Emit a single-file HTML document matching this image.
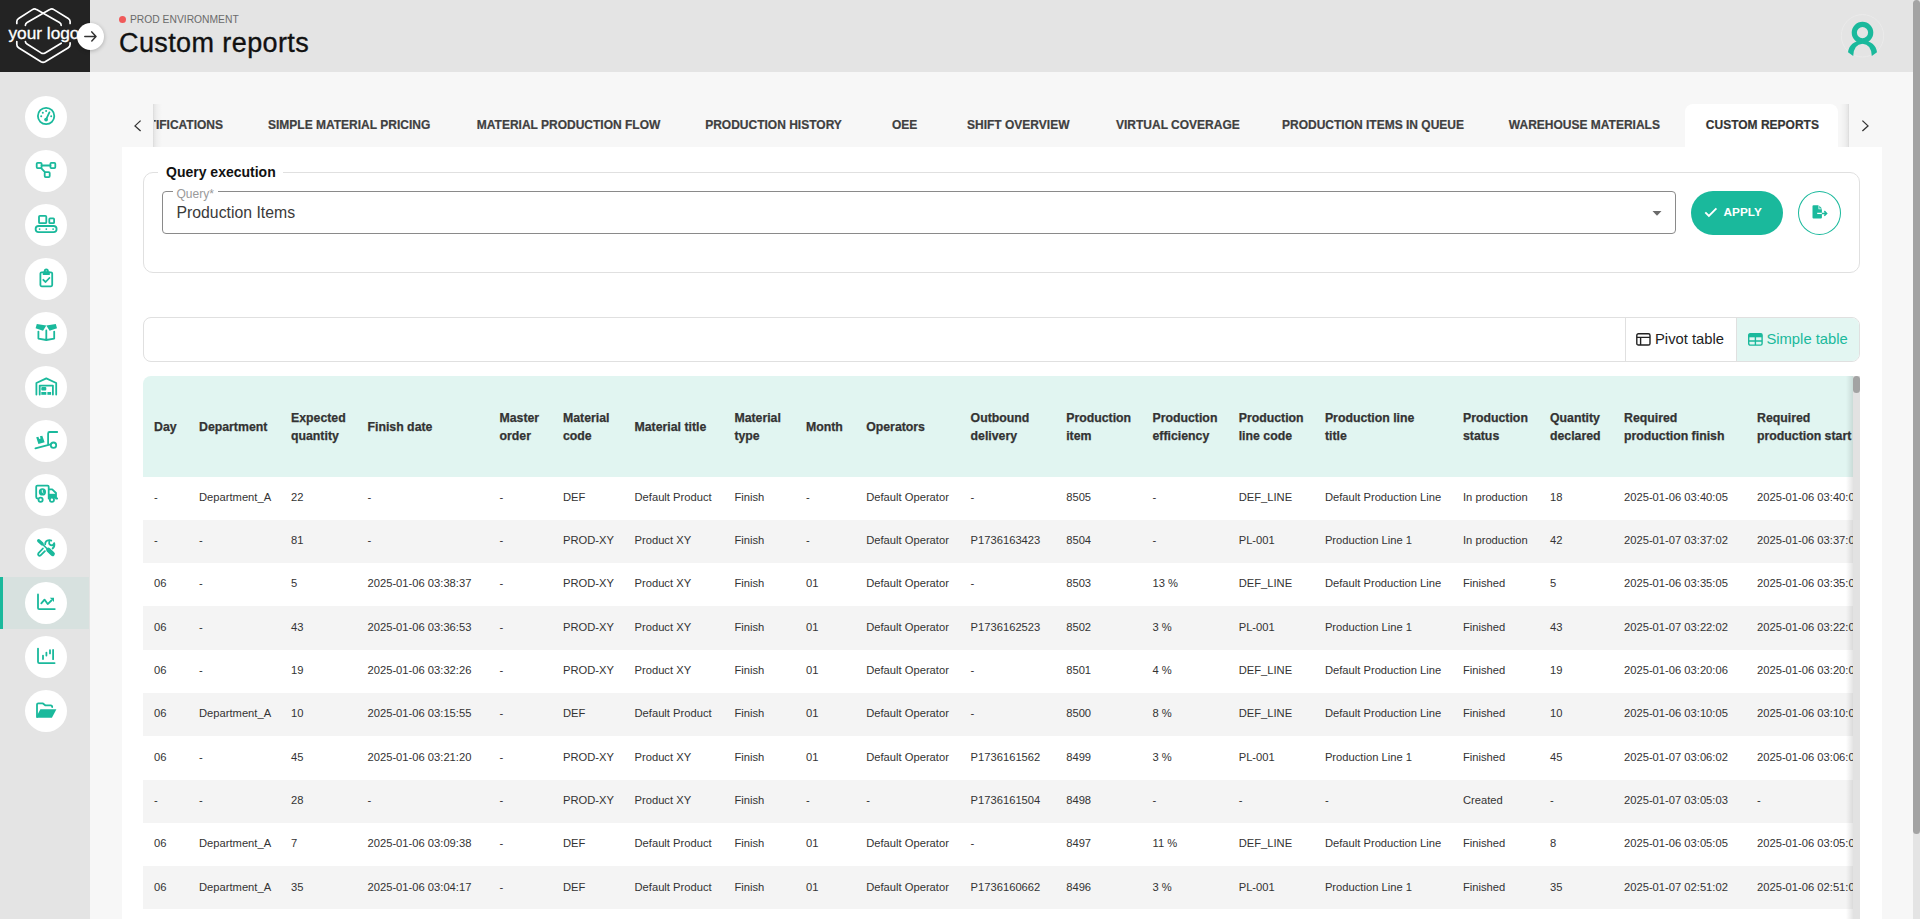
<!DOCTYPE html>
<html><head><meta charset="utf-8">
<style>
*{box-sizing:border-box;margin:0;padding:0}
html,body{width:1920px;height:919px;overflow:hidden;background:#f7f7f7;font-family:"Liberation Sans",sans-serif;color:#333}
.abs{position:absolute}
#hdr{position:absolute;left:0;top:0;width:1913px;height:72px;background:#e4e4e4}
#logo{position:absolute;left:0;top:0;width:90px;height:72px;background:#232323}
#side{position:absolute;left:0;top:72px;width:90px;height:847px;background:#e4e4e4}
.sb{position:absolute;left:25px;width:42px;height:42px;border-radius:50%;background:#fff}
.sb svg{position:absolute;left:0;top:0}
.tab{position:absolute;top:14px;font-size:12px;font-weight:bold;color:#404040;-webkit-text-stroke:0.2px #404040;white-space:nowrap;line-height:14px}
#card{position:absolute;left:122px;top:147px;width:1760px;height:772px;background:#fff}
.hd{position:absolute;font-size:12.3px;font-weight:bold;color:#333;-webkit-text-stroke:0.25px #333;line-height:18px;white-space:nowrap}
.cl{position:absolute;font-size:11.2px;color:#333;line-height:14px;white-space:nowrap}
.row{position:absolute;left:0;width:1710px}
</style></head><body>

<div id="hdr"></div>
<div class="abs" style="left:119px;top:16px;width:7px;height:7px;border-radius:50%;background:#f05a5a"></div>
<div class="abs" style="left:130px;top:14px;font-size:10.3px;color:#6b6b6b;line-height:12px;white-space:nowrap">PROD ENVIRONMENT</div>
<div class="abs" style="left:119px;top:28px;font-size:27px;color:#111;-webkit-text-stroke:0.35px #111;line-height:30px;white-space:nowrap;letter-spacing:0.4px">Custom reports</div>
<svg class="abs" style="left:1840px;top:14px" width="45" height="45" viewBox="0 0 45 45"><circle cx="22.5" cy="21.8" r="21.2" fill="none" stroke="#ebebeb" stroke-width="1"/><circle cx="22.5" cy="18.6" r="8.2" fill="none" stroke="#1ab99c" stroke-width="5.2"/><path d="M8 38.2 Q9.6 27 22.5 26.4 Q35.4 27 37 38.2 L31.8 42 Q31.2 30.2 22.5 29.8 Q13.8 30.2 13.2 42 Z" fill="#1ab99c"/></svg>
<div id="logo"><svg class="abs" style="left:0;top:0" width="90" height="72" viewBox="0 0 90 72"><path d="M16.8 23.5 V21.6 Q16.8 19.6 18.6 18.5 L32.4 9.6 Q34.5 8.3 36.6 9.6 L59.5 22.4 Q61.2 23.4 61.2 25.3" fill="none" stroke="#fff" stroke-width="1.7" stroke-linecap="round" stroke-linejoin="round"/><path d="M70.1 23.5 V21.6 Q70.1 19.6 68.3 18.5 L53.9 9.6 Q51.8 8.3 49.7 9.6 L27.1 22.4 Q25.4 23.4 25.4 25.3" fill="none" stroke="#fff" stroke-width="1.7" stroke-linecap="round" stroke-linejoin="round"/><path d="M16.8 41.6 V44.6 Q16.8 46.6 18.6 47.7 L41 61.8 Q43.1 63 45.2 61.8 L68.3 47.7 Q70.1 46.6 70.1 44.6 V42.8" fill="none" stroke="#fff" stroke-width="1.7" stroke-linecap="round" stroke-linejoin="round"/><path d="M25.4 41.6 Q25.6 43.2 27 44 L41.1 52.9 Q43.1 54.1 45.1 52.9 L61.2 43.2" fill="none" stroke="#fff" stroke-width="1.7" stroke-linecap="round" stroke-linejoin="round"/></svg><div class="abs" style="left:8.4px;top:22.6px;font-size:17.3px;color:#fff;-webkit-text-stroke:0.3px #fff;line-height:20px;white-space:nowrap">your logo</div><div class="abs" style="left:77px;top:23px;width:27px;height:27px;border-radius:50%;background:#fff;box-shadow:0 1px 4px rgba(0,0,0,0.25)"></div><svg class="abs" style="left:77px;top:23px" width="27" height="27" viewBox="0 0 27 27"><path d="M7.8 13.4 H18.6 M14.8 8.9 L19 13.4 L14.8 17.9" fill="none" stroke="#333" stroke-width="1.5" stroke-linecap="round" stroke-linejoin="round"/></svg></div>
<div id="side"></div>
<div class="abs" style="left:0;top:577px;width:89px;height:52px;background:#d7e1df"></div><div class="abs" style="left:0;top:577px;width:3px;height:52px;background:#1ab99c"></div>
<div class="sb" style="top:96px"><svg width="42" height="42" viewBox="0 0 42 42"><circle cx="21.1" cy="20" r="8.2" fill="none" stroke="#1ab99c" stroke-width="1.8" stroke-linecap="round" stroke-linejoin="round"/><path d="M21.1 23.4 L24.4 16.4" fill="none" stroke="#1ab99c" stroke-width="1.8" stroke-linecap="round" stroke-linejoin="round"/><circle cx="21.1" cy="23.6" r="1.9" fill="#1ab99c"/><circle cx="21.1" cy="14.9" r="1" fill="#1ab99c"/><circle cx="17.8" cy="16.8" r="1" fill="#1ab99c"/><circle cx="16.2" cy="20.2" r="1" fill="#1ab99c"/><circle cx="26.2" cy="20.2" r="1" fill="#1ab99c"/></svg></div>
<div class="sb" style="top:150px"><svg width="42" height="42" viewBox="0 0 42 42"><rect x="11.7" y="12.8" width="4.9" height="5.3" rx="1" fill="none" stroke="#1ab99c" stroke-width="1.8" stroke-linecap="round" stroke-linejoin="round"/><rect x="25.4" y="12.8" width="4.9" height="5.3" rx="1" fill="none" stroke="#1ab99c" stroke-width="1.8" stroke-linecap="round" stroke-linejoin="round"/><rect x="19.7" y="22.1" width="5" height="5" rx="1" fill="none" stroke="#1ab99c" stroke-width="1.8" stroke-linecap="round" stroke-linejoin="round"/><path d="M16.6 15.5 H25.4 M16.2 18.1 L19.9 22.2" fill="none" stroke="#1ab99c" stroke-width="1.8" stroke-linecap="round" stroke-linejoin="round"/></svg></div>
<div class="sb" style="top:204px"><svg width="42" height="42" viewBox="0 0 42 42"><rect x="14" y="11.8" width="7.3" height="7.4" rx="1" fill="none" stroke="#1ab99c" stroke-width="1.8" stroke-linecap="round" stroke-linejoin="round"/><rect x="24.3" y="14.4" width="4.8" height="4.8" rx="0.8" fill="none" stroke="#1ab99c" stroke-width="1.8" stroke-linecap="round" stroke-linejoin="round"/><rect x="10.6" y="22" width="21" height="6.2" rx="3.1" fill="none" stroke="#1ab99c" stroke-width="1.8" stroke-linecap="round" stroke-linejoin="round"/><circle cx="14.6" cy="25.1" r="0.9" fill="#1ab99c"/><circle cx="21.3" cy="25.1" r="0.9" fill="#1ab99c"/><circle cx="28.1" cy="25.1" r="0.9" fill="#1ab99c"/></svg></div>
<div class="sb" style="top:258px"><svg width="42" height="42" viewBox="0 0 42 42"><rect x="15.4" y="14.3" width="11.8" height="14" rx="1.2" fill="none" stroke="#1ab99c" stroke-width="1.8" stroke-linecap="round" stroke-linejoin="round"/><path d="M18.5 14.3 H24.1 V16.3 H18.5 Z" fill="#1ab99c" stroke="#1ab99c" stroke-width="1.4"/><circle cx="21.3" cy="13.1" r="1.6" fill="none" stroke="#1ab99c" stroke-width="1.8" stroke-linecap="round" stroke-linejoin="round"/><path d="M18.3 21.8 L20.6 24 L24.4 20" fill="none" stroke="#1ab99c" stroke-width="1.8" stroke-linecap="round" stroke-linejoin="round"/></svg></div>
<div class="sb" style="top:312px"><svg width="42" height="42" viewBox="0 0 42 42"><path d="M11.8 12 L21.3 13.6 L18 18.8 L10.6 16.3 Z" fill="#1ab99c"/><path d="M30.8 12 L21.3 13.6 L24.6 18.8 L32 16.3 Z" fill="#1ab99c"/><path d="M13.4 19.6 V26.6 L21.3 28 L29.2 26.6 V19.6 M21.3 18.4 V27.6" fill="none" stroke="#1ab99c" stroke-width="1.8" stroke-linecap="round" stroke-linejoin="round"/></svg></div>
<div class="sb" style="top:366px"><svg width="42" height="42" viewBox="0 0 42 42"><path d="M11.4 28.6 V17 L21.3 12.4 L31.2 17 V28.6" fill="none" stroke="#1ab99c" stroke-width="1.8" stroke-linecap="round" stroke-linejoin="round"/><path d="M14.7 28.6 V19.6 H27.9 V28.6" fill="none" stroke="#1ab99c" stroke-width="1.8" stroke-linecap="round" stroke-linejoin="round"/><rect x="16.3" y="21" width="5" height="3.6" rx="1" fill="#1ab99c"/><rect x="16.3" y="26" width="5" height="2.8" fill="#1ab99c"/><rect x="22.4" y="26" width="3.7" height="2.8" fill="#1ab99c"/></svg></div>
<div class="sb" style="top:420px"><svg width="42" height="42" viewBox="0 0 42 42"><path d="M32.2 12 H24.6 Q23.1 12 23.1 13.5 V24.4 M10.4 28.3 L25.6 24.4" fill="none" stroke="#1ab99c" stroke-width="1.8" stroke-linecap="round" stroke-linejoin="round"/><circle cx="28.5" cy="25.2" r="2.7" fill="none" stroke="#1ab99c" stroke-width="1.8" stroke-linecap="round" stroke-linejoin="round"/><path d="M11.2 17.3 L13.4 16.8 L14.2 19 L15.6 18.6 L14.9 16.3 L17.3 15.7 L19.6 22.2 L13.4 24 Z" fill="#1ab99c"/></svg></div>
<div class="sb" style="top:474px"><svg width="42" height="42" viewBox="0 0 42 42"><path d="M12.6 24.5 Q11.2 24.5 11.2 23.1 V12.8 Q11.2 11.6 12.4 11.6 H22.6 Q23.7 11.6 23.7 12.8 V24.5 M23.7 15.3 H27.2 L31 19 V24.5 H32.2" fill="none" stroke="#1ab99c" stroke-width="1.8" stroke-linecap="round" stroke-linejoin="round"/><path d="M23.7 19.8 H31 V24.5 H23.7 Z" fill="#1ab99c"/><circle cx="15.6" cy="25.8" r="2.1" fill="#fff" fill="none" stroke="#1ab99c" stroke-width="1.8" stroke-linecap="round" stroke-linejoin="round"/><circle cx="26.9" cy="25.8" r="2.1" fill="#fff" fill="none" stroke="#1ab99c" stroke-width="1.8" stroke-linecap="round" stroke-linejoin="round"/><circle cx="17.4" cy="17.9" r="3.6" fill="#1ab99c"/><path d="M17.3 15.9 V18.2 L18.4 19" stroke="#fff" stroke-width="0.9" fill="none"/></svg></div>
<div class="sb" style="top:528px"><svg width="42" height="42" viewBox="0 0 42 42"><path d="M13.7 12.7 L17.1 15.8" stroke="#1ab99c" stroke-width="3.3" stroke-linecap="round"/><path d="M17 15.8 L23 21.6" stroke="#1ab99c" stroke-width="1.5"/><path d="M23.4 21.9 L27.6 25.9" stroke="#1ab99c" stroke-width="4.5" stroke-linecap="round"/><path d="M17.9 20.5 L13.5 25.1 Q12.6 26.3 13.5 27.3 Q14.5 28.2 15.6 27.3 L19.9 23.2" fill="none" stroke="#1ab99c" stroke-width="1.8" stroke-linecap="round" stroke-linejoin="round" stroke-width="1.6"/><path d="M20.2 16.4 Q20 12.7 24.3 12.2 Q25.6 12.2 26.3 12.6 M24.2 13.8 Q23.6 17.3 27.3 17.4 Q28.7 16.8 29.2 15.1 Q30 18.4 27.6 20.5" fill="none" stroke="#1ab99c" stroke-width="1.8" stroke-linecap="round" stroke-linejoin="round" stroke-width="1.6"/></svg></div>
<div class="sb" style="top:582px"><svg width="42" height="42" viewBox="0 0 42 42"><path d="M13 12.4 V26 Q13 27.1 14.1 27.1 H29.8" fill="none" stroke="#1ab99c" stroke-width="1.8" stroke-linecap="round" stroke-linejoin="round"/><path d="M16.3 21.4 L19.5 17.6 L22.7 22.1 L26.4 18.5" fill="none" stroke="#1ab99c" stroke-width="1.8" stroke-linecap="round" stroke-linejoin="round"/><path d="M24.8 15.8 H29 V20 Z" fill="#1ab99c"/></svg></div>
<div class="sb" style="top:636px"><svg width="42" height="42" viewBox="0 0 42 42"><path d="M13 12.6 V25.8 Q13 27.1 14.3 27.1 H29.6" fill="none" stroke="#1ab99c" stroke-width="1.8" stroke-linecap="round" stroke-linejoin="round"/><path d="M18 19.6 V23.1 M21.4 16.6 V19.5 M25 14.2 V17.4 M28.1 14 V23.2" fill="none" stroke="#1ab99c" stroke-width="1.8" stroke-linecap="round" stroke-linejoin="round" stroke-width="1.8"/></svg></div>
<div class="sb" style="top:690px"><svg width="42" height="42" viewBox="0 0 42 42"><path d="M12 27 V14.6 Q12 13.3 13.3 13.3 H17.6 L20.2 15.3 H25.6 Q27.2 15.3 27.2 17" fill="none" stroke="#1ab99c" stroke-width="1.8" stroke-linecap="round" stroke-linejoin="round"/><path d="M15.4 19.2 H31.4 L26.9 27.8 H12 V25.5 Z" fill="#1ab99c"/></svg></div>
<div class="abs" style="left:1684.7px;top:104px;width:153.2px;height:43px;background:#fff;border-radius:8px 8px 0 0"></div>
<div class="abs" style="left:154px;top:104px;width:1694px;height:43px;overflow:hidden">
<div class="tab" style="right:1625px">NOTIFICATIONS</div>
<div class="tab" style="left:114px;color:#404040">SIMPLE MATERIAL PRICING</div>
<div class="tab" style="left:322.8px;color:#404040">MATERIAL PRODUCTION FLOW</div>
<div class="tab" style="left:551.2px;color:#404040">PRODUCTION HISTORY</div>
<div class="tab" style="left:738px;color:#404040">OEE</div>
<div class="tab" style="left:813px;color:#404040">SHIFT OVERVIEW</div>
<div class="tab" style="left:962px;color:#404040">VIRTUAL COVERAGE</div>
<div class="tab" style="left:1128px;color:#404040">PRODUCTION ITEMS IN QUEUE</div>
<div class="tab" style="left:1354.8px;color:#404040">WAREHOUSE MATERIALS</div>
<div class="tab" style="left:1551.8px;color:#333">CUSTOM REPORTS</div>
</div>
<div class="abs" style="left:153px;top:104px;width:9px;height:43px;background:linear-gradient(90deg,rgba(0,0,0,0.13) 0,rgba(0,0,0,0.07) 1px,rgba(0,0,0,0.03) 4px,rgba(0,0,0,0) 9px)"></div>
<div class="abs" style="left:1840px;top:104px;width:9px;height:43px;background:linear-gradient(270deg,rgba(0,0,0,0.13) 0,rgba(0,0,0,0.07) 1px,rgba(0,0,0,0.03) 4px,rgba(0,0,0,0) 9px)"></div>
<svg class="abs" style="left:130px;top:117px" width="16" height="16" viewBox="0 0 16 16"><path d="M10.6 3.6 L5 8.9 L10.6 14.1" fill="none" stroke="#333" stroke-width="1.3"/></svg>
<svg class="abs" style="left:1857px;top:117px" width="16" height="16" viewBox="0 0 16 16"><path d="M5.4 3.6 L11 8.9 L5.4 14.1" fill="none" stroke="#333" stroke-width="1.3"/></svg>
<div id="card"></div>
<div class="abs" style="left:143px;top:172px;width:1717px;height:101px;border:1px solid #e0e0e0;border-radius:10px"></div>
<div class="abs" style="left:158px;top:165px;width:125px;height:14px;background:#fff"></div>
<div class="abs" style="left:166px;top:164px;font-size:14px;font-weight:bold;color:#111;line-height:16px;white-space:nowrap">Query execution</div>
<div class="abs" style="left:162px;top:191px;width:1514px;height:43px;border:1px solid #8a8a8a;border-radius:4px"></div>
<div class="abs" style="left:172.5px;top:186px;width:45.5px;height:8px;background:#fff"></div>
<div class="abs" style="left:176.5px;top:188px;font-size:12px;color:#9a9a9a;line-height:13px;white-space:nowrap">Query*</div>
<div class="abs" style="left:176.5px;top:203.5px;font-size:15.8px;color:#3a3a3a;line-height:18px;white-space:nowrap">Production Items</div>
<svg class="abs" style="left:1651px;top:210px" width="12" height="7" viewBox="0 0 12 7"><path d="M1.5 1 H10.5 L6 5.8 Z" fill="#6b6b6b"/></svg>
<div class="abs" style="left:1691px;top:191px;width:92px;height:44px;border-radius:22px;background:#1ab99c"></div>
<svg class="abs" style="left:1703px;top:206px" width="16" height="13" viewBox="0 0 16 13"><path d="M2.3 6.3 L5.9 9.9 L13.4 2.4" fill="none" stroke="#fff" stroke-width="1.9"/></svg>
<div class="abs" style="left:1723.5px;top:206px;font-size:11.8px;font-weight:bold;color:#fff;line-height:13px;white-space:nowrap">APPLY</div>
<div class="abs" style="left:1798px;top:191px;width:43px;height:44px;border-radius:50%;border:1px solid #1ab99c"></div>
<svg class="abs" style="left:1806px;top:200px" width="28" height="24" viewBox="0 0 28 24"><path d="M7.5 5.2 H12.5 V9.2 H15.9 V17.5 Q15.9 18.5 14.9 18.5 H7.5 Q6.5 18.5 6.5 17.5 V6.2 Q6.5 5.2 7.5 5.2 Z" fill="#1ab99c"/><path d="M13.3 5.8 L16 8.5 H13.3 Z" fill="#1ab99c"/><path d="M11.2 13.4 H15.9" stroke="#fff" stroke-width="1.3"/><path d="M15.9 13.4 H20.6 M18.3 11.1 L20.6 13.4 L18.3 15.7" stroke="#1ab99c" stroke-width="1.5" fill="none"/></svg>
<div class="abs" style="left:143px;top:317px;width:1717px;height:45px;border:1px solid #e0e0e0;border-radius:8px;overflow:hidden"><div class="abs" style="left:1481px;top:0;width:1px;height:45px;background:#e0e0e0"></div><div class="abs" style="left:1592px;top:0;width:1px;height:45px;background:#e0e0e0"></div><div class="abs" style="left:1593px;top:0;width:124px;height:45px;background:#e3f6f2"></div></div>
<svg class="abs" style="left:1636px;top:333px" width="15" height="13" viewBox="0 0 15 13"><rect x="0.8" y="0.8" width="13.2" height="11.2" rx="1.6" fill="none" stroke="#222" stroke-width="1.4"/><path d="M0.8 4.4 H14 M4.6 4.4 V12" stroke="#222" stroke-width="1.4"/></svg>
<div class="abs" style="left:1655px;top:330.5px;font-size:14.8px;color:#222;line-height:17px;white-space:nowrap">Pivot table</div>
<svg class="abs" style="left:1747.5px;top:333px" width="15" height="13" viewBox="0 0 15 13"><rect x="0.7" y="0.7" width="13.4" height="11.4" rx="1.6" fill="none" stroke="#1ab99c" stroke-width="1.4"/><rect x="0.7" y="0.7" width="13.4" height="3.6" fill="#1ab99c"/><path d="M0.7 8 H14 M7.4 4 V12" stroke="#1ab99c" stroke-width="1.4"/></svg>
<div class="abs" style="left:1766.4px;top:330.5px;font-size:14.8px;color:#1ab99c;line-height:17px;white-space:nowrap">Simple table</div>
<div class="abs" style="left:143px;top:376px;width:1710px;height:543px;overflow:hidden;border-radius:8px 0 0 0">
<div class="row" style="top:0;height:100.5px;background:#e1f5f1"></div>
<div class="row" style="top:100.50px;height:43.3px;background:#fff"></div>
<div class="row" style="top:143.80px;height:43.3px;background:#f4f4f4"></div>
<div class="row" style="top:187.10px;height:43.3px;background:#fff"></div>
<div class="row" style="top:230.40px;height:43.3px;background:#f4f4f4"></div>
<div class="row" style="top:273.70px;height:43.3px;background:#fff"></div>
<div class="row" style="top:317.00px;height:43.3px;background:#f4f4f4"></div>
<div class="row" style="top:360.30px;height:43.3px;background:#fff"></div>
<div class="row" style="top:403.60px;height:43.3px;background:#f4f4f4"></div>
<div class="row" style="top:446.90px;height:43.3px;background:#fff"></div>
<div class="row" style="top:490.20px;height:43.3px;background:#f4f4f4"></div>
<div class="row" style="top:533.50px;height:43.3px;background:#fff"></div>
<div class="hd" style="left:11px;top:42px">Day</div>
<div class="hd" style="left:56px;top:42px">Department</div>
<div class="hd" style="left:148px;top:33px">Expected<br>quantity</div>
<div class="hd" style="left:224.5px;top:42px">Finish date</div>
<div class="hd" style="left:356.5px;top:33px">Master<br>order</div>
<div class="hd" style="left:420px;top:33px">Material<br>code</div>
<div class="hd" style="left:491.5px;top:42px">Material title</div>
<div class="hd" style="left:591.4px;top:33px">Material<br>type</div>
<div class="hd" style="left:663px;top:42px">Month</div>
<div class="hd" style="left:723.2px;top:42px">Operators</div>
<div class="hd" style="left:827.6px;top:33px">Outbound<br>delivery</div>
<div class="hd" style="left:923.2px;top:33px">Production<br>item</div>
<div class="hd" style="left:1009.5px;top:33px">Production<br>efficiency</div>
<div class="hd" style="left:1095.7px;top:33px">Production<br>line code</div>
<div class="hd" style="left:1181.9px;top:33px">Production line<br>title</div>
<div class="hd" style="left:1320px;top:33px">Production<br>status</div>
<div class="hd" style="left:1407px;top:33px">Quantity<br>declared</div>
<div class="hd" style="left:1481px;top:33px">Required<br>production finish</div>
<div class="hd" style="left:1614px;top:33px">Required<br>production start</div>
<div class="cl" style="left:11px;top:113.85px">-</div>
<div class="cl" style="left:56px;top:113.85px">Department_A</div>
<div class="cl" style="left:148px;top:113.85px">22</div>
<div class="cl" style="left:224.5px;top:113.85px">-</div>
<div class="cl" style="left:356.5px;top:113.85px">-</div>
<div class="cl" style="left:420px;top:113.85px">DEF</div>
<div class="cl" style="left:491.5px;top:113.85px">Default Product</div>
<div class="cl" style="left:591.4px;top:113.85px">Finish</div>
<div class="cl" style="left:663px;top:113.85px">-</div>
<div class="cl" style="left:723.2px;top:113.85px">Default Operator</div>
<div class="cl" style="left:827.6px;top:113.85px">-</div>
<div class="cl" style="left:923.2px;top:113.85px">8505</div>
<div class="cl" style="left:1009.5px;top:113.85px">-</div>
<div class="cl" style="left:1095.7px;top:113.85px">DEF_LINE</div>
<div class="cl" style="left:1181.9px;top:113.85px">Default Production Line</div>
<div class="cl" style="left:1320px;top:113.85px">In production</div>
<div class="cl" style="left:1407px;top:113.85px">18</div>
<div class="cl" style="left:1481px;top:113.85px">2025-01-06 03:40:05</div>
<div class="cl" style="left:1614px;top:113.85px">2025-01-06 03:40:05</div>
<div class="cl" style="left:11px;top:157.15px">-</div>
<div class="cl" style="left:56px;top:157.15px">-</div>
<div class="cl" style="left:148px;top:157.15px">81</div>
<div class="cl" style="left:224.5px;top:157.15px">-</div>
<div class="cl" style="left:356.5px;top:157.15px">-</div>
<div class="cl" style="left:420px;top:157.15px">PROD-XY</div>
<div class="cl" style="left:491.5px;top:157.15px">Product XY</div>
<div class="cl" style="left:591.4px;top:157.15px">Finish</div>
<div class="cl" style="left:663px;top:157.15px">-</div>
<div class="cl" style="left:723.2px;top:157.15px">Default Operator</div>
<div class="cl" style="left:827.6px;top:157.15px">P1736163423</div>
<div class="cl" style="left:923.2px;top:157.15px">8504</div>
<div class="cl" style="left:1009.5px;top:157.15px">-</div>
<div class="cl" style="left:1095.7px;top:157.15px">PL-001</div>
<div class="cl" style="left:1181.9px;top:157.15px">Production Line 1</div>
<div class="cl" style="left:1320px;top:157.15px">In production</div>
<div class="cl" style="left:1407px;top:157.15px">42</div>
<div class="cl" style="left:1481px;top:157.15px">2025-01-07 03:37:02</div>
<div class="cl" style="left:1614px;top:157.15px">2025-01-06 03:37:02</div>
<div class="cl" style="left:11px;top:200.45px">06</div>
<div class="cl" style="left:56px;top:200.45px">-</div>
<div class="cl" style="left:148px;top:200.45px">5</div>
<div class="cl" style="left:224.5px;top:200.45px">2025-01-06 03:38:37</div>
<div class="cl" style="left:356.5px;top:200.45px">-</div>
<div class="cl" style="left:420px;top:200.45px">PROD-XY</div>
<div class="cl" style="left:491.5px;top:200.45px">Product XY</div>
<div class="cl" style="left:591.4px;top:200.45px">Finish</div>
<div class="cl" style="left:663px;top:200.45px">01</div>
<div class="cl" style="left:723.2px;top:200.45px">Default Operator</div>
<div class="cl" style="left:827.6px;top:200.45px">-</div>
<div class="cl" style="left:923.2px;top:200.45px">8503</div>
<div class="cl" style="left:1009.5px;top:200.45px">13 %</div>
<div class="cl" style="left:1095.7px;top:200.45px">DEF_LINE</div>
<div class="cl" style="left:1181.9px;top:200.45px">Default Production Line</div>
<div class="cl" style="left:1320px;top:200.45px">Finished</div>
<div class="cl" style="left:1407px;top:200.45px">5</div>
<div class="cl" style="left:1481px;top:200.45px">2025-01-06 03:35:05</div>
<div class="cl" style="left:1614px;top:200.45px">2025-01-06 03:35:05</div>
<div class="cl" style="left:11px;top:243.75px">06</div>
<div class="cl" style="left:56px;top:243.75px">-</div>
<div class="cl" style="left:148px;top:243.75px">43</div>
<div class="cl" style="left:224.5px;top:243.75px">2025-01-06 03:36:53</div>
<div class="cl" style="left:356.5px;top:243.75px">-</div>
<div class="cl" style="left:420px;top:243.75px">PROD-XY</div>
<div class="cl" style="left:491.5px;top:243.75px">Product XY</div>
<div class="cl" style="left:591.4px;top:243.75px">Finish</div>
<div class="cl" style="left:663px;top:243.75px">01</div>
<div class="cl" style="left:723.2px;top:243.75px">Default Operator</div>
<div class="cl" style="left:827.6px;top:243.75px">P1736162523</div>
<div class="cl" style="left:923.2px;top:243.75px">8502</div>
<div class="cl" style="left:1009.5px;top:243.75px">3 %</div>
<div class="cl" style="left:1095.7px;top:243.75px">PL-001</div>
<div class="cl" style="left:1181.9px;top:243.75px">Production Line 1</div>
<div class="cl" style="left:1320px;top:243.75px">Finished</div>
<div class="cl" style="left:1407px;top:243.75px">43</div>
<div class="cl" style="left:1481px;top:243.75px">2025-01-07 03:22:02</div>
<div class="cl" style="left:1614px;top:243.75px">2025-01-06 03:22:02</div>
<div class="cl" style="left:11px;top:287.05px">06</div>
<div class="cl" style="left:56px;top:287.05px">-</div>
<div class="cl" style="left:148px;top:287.05px">19</div>
<div class="cl" style="left:224.5px;top:287.05px">2025-01-06 03:32:26</div>
<div class="cl" style="left:356.5px;top:287.05px">-</div>
<div class="cl" style="left:420px;top:287.05px">PROD-XY</div>
<div class="cl" style="left:491.5px;top:287.05px">Product XY</div>
<div class="cl" style="left:591.4px;top:287.05px">Finish</div>
<div class="cl" style="left:663px;top:287.05px">01</div>
<div class="cl" style="left:723.2px;top:287.05px">Default Operator</div>
<div class="cl" style="left:827.6px;top:287.05px">-</div>
<div class="cl" style="left:923.2px;top:287.05px">8501</div>
<div class="cl" style="left:1009.5px;top:287.05px">4 %</div>
<div class="cl" style="left:1095.7px;top:287.05px">DEF_LINE</div>
<div class="cl" style="left:1181.9px;top:287.05px">Default Production Line</div>
<div class="cl" style="left:1320px;top:287.05px">Finished</div>
<div class="cl" style="left:1407px;top:287.05px">19</div>
<div class="cl" style="left:1481px;top:287.05px">2025-01-06 03:20:06</div>
<div class="cl" style="left:1614px;top:287.05px">2025-01-06 03:20:06</div>
<div class="cl" style="left:11px;top:330.35px">06</div>
<div class="cl" style="left:56px;top:330.35px">Department_A</div>
<div class="cl" style="left:148px;top:330.35px">10</div>
<div class="cl" style="left:224.5px;top:330.35px">2025-01-06 03:15:55</div>
<div class="cl" style="left:356.5px;top:330.35px">-</div>
<div class="cl" style="left:420px;top:330.35px">DEF</div>
<div class="cl" style="left:491.5px;top:330.35px">Default Product</div>
<div class="cl" style="left:591.4px;top:330.35px">Finish</div>
<div class="cl" style="left:663px;top:330.35px">01</div>
<div class="cl" style="left:723.2px;top:330.35px">Default Operator</div>
<div class="cl" style="left:827.6px;top:330.35px">-</div>
<div class="cl" style="left:923.2px;top:330.35px">8500</div>
<div class="cl" style="left:1009.5px;top:330.35px">8 %</div>
<div class="cl" style="left:1095.7px;top:330.35px">DEF_LINE</div>
<div class="cl" style="left:1181.9px;top:330.35px">Default Production Line</div>
<div class="cl" style="left:1320px;top:330.35px">Finished</div>
<div class="cl" style="left:1407px;top:330.35px">10</div>
<div class="cl" style="left:1481px;top:330.35px">2025-01-06 03:10:05</div>
<div class="cl" style="left:1614px;top:330.35px">2025-01-06 03:10:05</div>
<div class="cl" style="left:11px;top:373.65px">06</div>
<div class="cl" style="left:56px;top:373.65px">-</div>
<div class="cl" style="left:148px;top:373.65px">45</div>
<div class="cl" style="left:224.5px;top:373.65px">2025-01-06 03:21:20</div>
<div class="cl" style="left:356.5px;top:373.65px">-</div>
<div class="cl" style="left:420px;top:373.65px">PROD-XY</div>
<div class="cl" style="left:491.5px;top:373.65px">Product XY</div>
<div class="cl" style="left:591.4px;top:373.65px">Finish</div>
<div class="cl" style="left:663px;top:373.65px">01</div>
<div class="cl" style="left:723.2px;top:373.65px">Default Operator</div>
<div class="cl" style="left:827.6px;top:373.65px">P1736161562</div>
<div class="cl" style="left:923.2px;top:373.65px">8499</div>
<div class="cl" style="left:1009.5px;top:373.65px">3 %</div>
<div class="cl" style="left:1095.7px;top:373.65px">PL-001</div>
<div class="cl" style="left:1181.9px;top:373.65px">Production Line 1</div>
<div class="cl" style="left:1320px;top:373.65px">Finished</div>
<div class="cl" style="left:1407px;top:373.65px">45</div>
<div class="cl" style="left:1481px;top:373.65px">2025-01-07 03:06:02</div>
<div class="cl" style="left:1614px;top:373.65px">2025-01-06 03:06:02</div>
<div class="cl" style="left:11px;top:416.95px">-</div>
<div class="cl" style="left:56px;top:416.95px">-</div>
<div class="cl" style="left:148px;top:416.95px">28</div>
<div class="cl" style="left:224.5px;top:416.95px">-</div>
<div class="cl" style="left:356.5px;top:416.95px">-</div>
<div class="cl" style="left:420px;top:416.95px">PROD-XY</div>
<div class="cl" style="left:491.5px;top:416.95px">Product XY</div>
<div class="cl" style="left:591.4px;top:416.95px">Finish</div>
<div class="cl" style="left:663px;top:416.95px">-</div>
<div class="cl" style="left:723.2px;top:416.95px">-</div>
<div class="cl" style="left:827.6px;top:416.95px">P1736161504</div>
<div class="cl" style="left:923.2px;top:416.95px">8498</div>
<div class="cl" style="left:1009.5px;top:416.95px">-</div>
<div class="cl" style="left:1095.7px;top:416.95px">-</div>
<div class="cl" style="left:1181.9px;top:416.95px">-</div>
<div class="cl" style="left:1320px;top:416.95px">Created</div>
<div class="cl" style="left:1407px;top:416.95px">-</div>
<div class="cl" style="left:1481px;top:416.95px">2025-01-07 03:05:03</div>
<div class="cl" style="left:1614px;top:416.95px">-</div>
<div class="cl" style="left:11px;top:460.25px">06</div>
<div class="cl" style="left:56px;top:460.25px">Department_A</div>
<div class="cl" style="left:148px;top:460.25px">7</div>
<div class="cl" style="left:224.5px;top:460.25px">2025-01-06 03:09:38</div>
<div class="cl" style="left:356.5px;top:460.25px">-</div>
<div class="cl" style="left:420px;top:460.25px">DEF</div>
<div class="cl" style="left:491.5px;top:460.25px">Default Product</div>
<div class="cl" style="left:591.4px;top:460.25px">Finish</div>
<div class="cl" style="left:663px;top:460.25px">01</div>
<div class="cl" style="left:723.2px;top:460.25px">Default Operator</div>
<div class="cl" style="left:827.6px;top:460.25px">-</div>
<div class="cl" style="left:923.2px;top:460.25px">8497</div>
<div class="cl" style="left:1009.5px;top:460.25px">11 %</div>
<div class="cl" style="left:1095.7px;top:460.25px">DEF_LINE</div>
<div class="cl" style="left:1181.9px;top:460.25px">Default Production Line</div>
<div class="cl" style="left:1320px;top:460.25px">Finished</div>
<div class="cl" style="left:1407px;top:460.25px">8</div>
<div class="cl" style="left:1481px;top:460.25px">2025-01-06 03:05:05</div>
<div class="cl" style="left:1614px;top:460.25px">2025-01-06 03:05:05</div>
<div class="cl" style="left:11px;top:503.55px">06</div>
<div class="cl" style="left:56px;top:503.55px">Department_A</div>
<div class="cl" style="left:148px;top:503.55px">35</div>
<div class="cl" style="left:224.5px;top:503.55px">2025-01-06 03:04:17</div>
<div class="cl" style="left:356.5px;top:503.55px">-</div>
<div class="cl" style="left:420px;top:503.55px">DEF</div>
<div class="cl" style="left:491.5px;top:503.55px">Default Product</div>
<div class="cl" style="left:591.4px;top:503.55px">Finish</div>
<div class="cl" style="left:663px;top:503.55px">01</div>
<div class="cl" style="left:723.2px;top:503.55px">Default Operator</div>
<div class="cl" style="left:827.6px;top:503.55px">P1736160662</div>
<div class="cl" style="left:923.2px;top:503.55px">8496</div>
<div class="cl" style="left:1009.5px;top:503.55px">3 %</div>
<div class="cl" style="left:1095.7px;top:503.55px">PL-001</div>
<div class="cl" style="left:1181.9px;top:503.55px">Production Line 1</div>
<div class="cl" style="left:1320px;top:503.55px">Finished</div>
<div class="cl" style="left:1407px;top:503.55px">35</div>
<div class="cl" style="left:1481px;top:503.55px">2025-01-07 02:51:02</div>
<div class="cl" style="left:1614px;top:503.55px">2025-01-06 02:51:02</div>
<div class="abs" style="left:1703px;top:0;width:8px;height:543px;background:linear-gradient(270deg,rgba(0,0,0,0.12),rgba(0,0,0,0))"></div>
</div>
<div class="abs" style="left:1853px;top:376px;width:7px;height:543px;background:#e2e2e2"></div>
<div class="abs" style="left:1853px;top:376px;width:7px;height:17px;background:#a3a3a3;border-radius:3.5px"></div>
<div class="abs" style="left:1913px;top:0;width:7px;height:919px;background:#e4e4e4"></div>
<div class="abs" style="left:1913px;top:0;width:7px;height:834px;background:#a3a3a3;border-radius:3.5px"></div>
</body></html>
